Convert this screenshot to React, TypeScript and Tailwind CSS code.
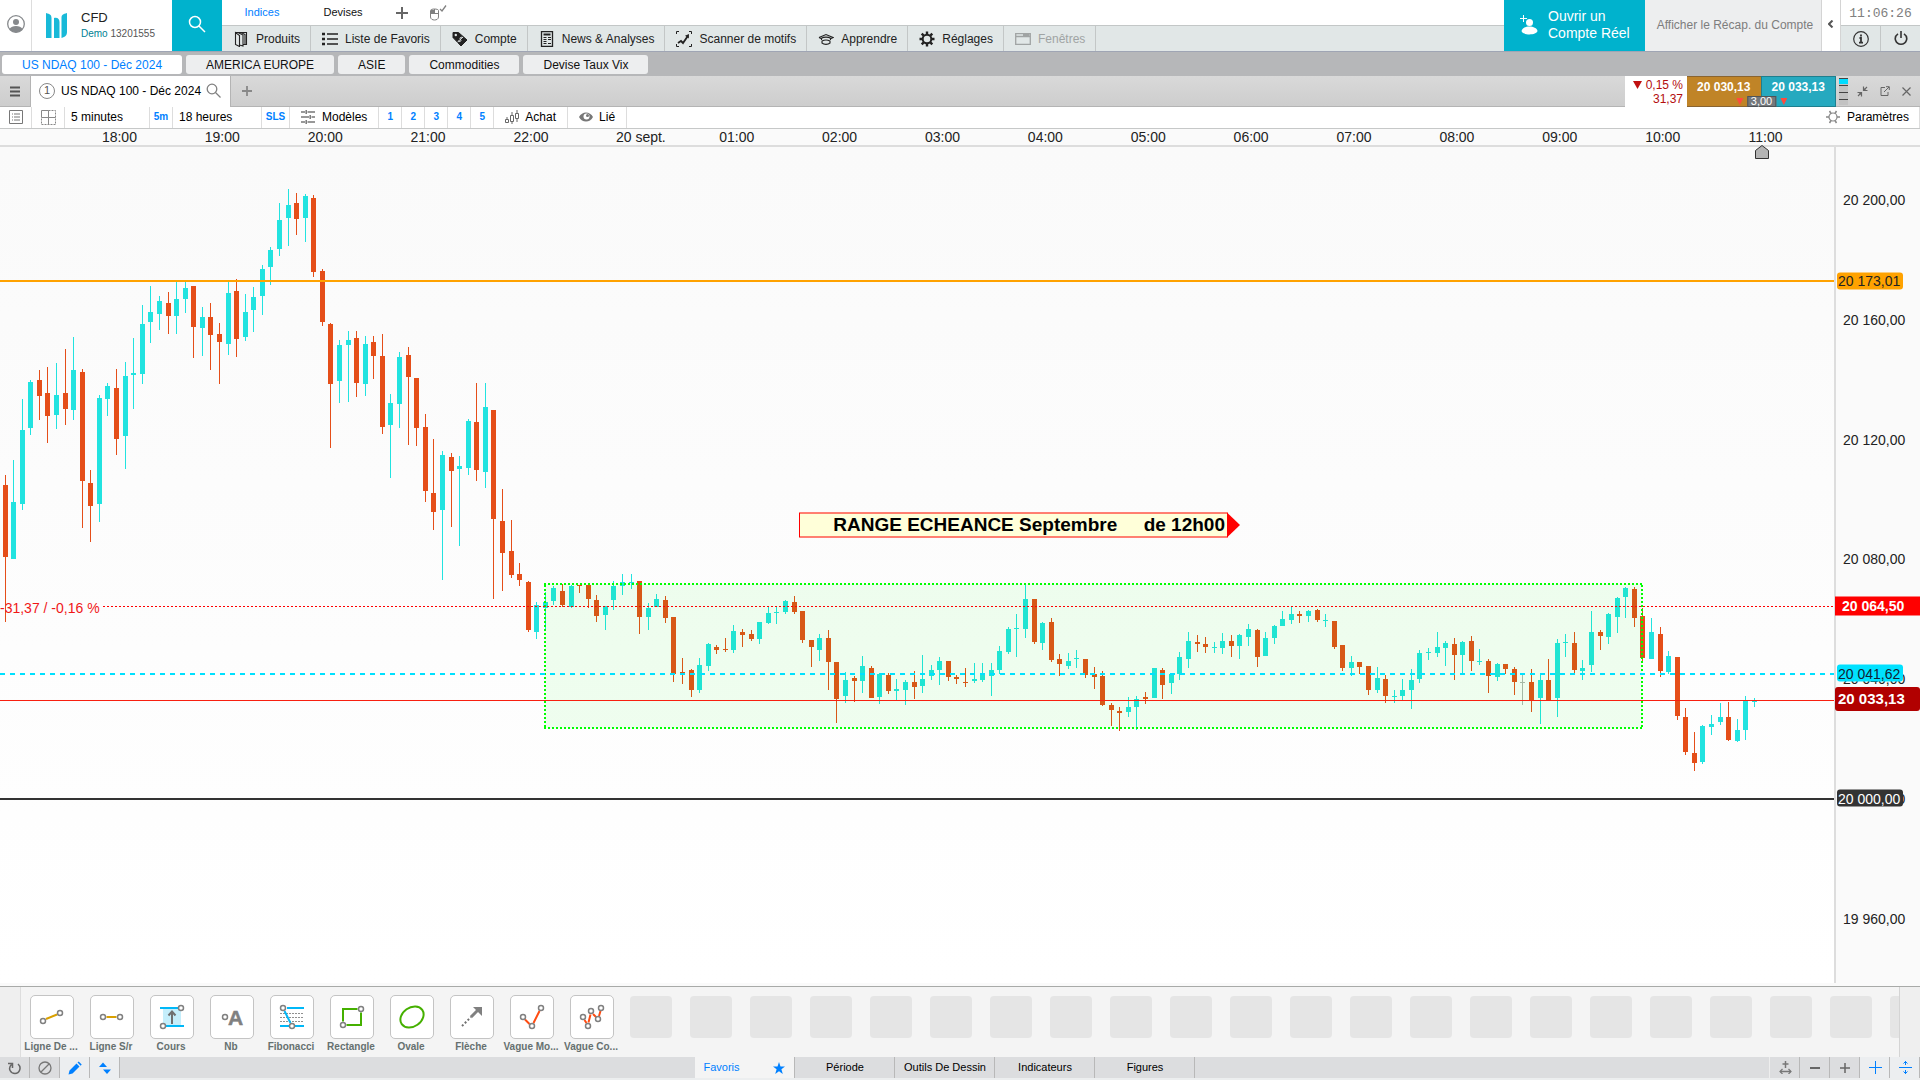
import { useState } from "react";
import type { ReactNode } from "react";

type Candle = ["u" | "d" | "n", number, number, number, number];

// [direction, high, body top, body bottom, low] in plot units
const CANDLES: Candle[] = [
  ["d", 328, 338, 410, 475], ["u", 313, 355, 412, 412], ["u", 252, 283, 357, 363], ["u", 233, 235, 281, 288],
  ["d", 223, 233, 249, 273], ["d", 220, 246, 269, 296], ["u", 216, 248, 268, 282], ["d", 202, 246, 262, 278],
  ["u", 190, 223, 263, 273], ["d", 222, 225, 334, 381], ["d", 323, 336, 359, 395], ["u", 248, 251, 357, 375],
  ["u", 236, 239, 252, 269], ["d", 222, 241, 292, 308], ["u", 215, 229, 289, 322], ["u", 191, 226, 228, 262],
  ["u", 158, 177, 227, 237], ["u", 139, 165, 175, 196], ["u", 149, 154, 167, 183], ["d", 145, 156, 169, 187],
  ["u", 135, 152, 169, 187], ["u", 134, 141, 152, 166], ["d", 139, 139, 180, 211], ["u", 160, 170, 181, 209],
  ["d", 156, 170, 188, 223], ["d", 176, 187, 195, 237], ["u", 134, 146, 197, 208], ["d", 132, 144, 192, 210],
  ["u", 147, 165, 190, 194], ["u", 140, 150, 163, 185], ["u", 118, 122, 149, 168], ["u", 100, 103, 120, 138],
  ["u", 56, 73, 102, 109], ["u", 42, 58, 71, 99], ["d", 46, 56, 72, 88], ["u", 47, 49, 71, 95],
  ["d", 48, 51, 125, 130], ["d", 122, 124, 175, 179], ["d", 176, 177, 237, 301], ["u", 193, 198, 234, 256],
  ["u", 184, 193, 198, 255], ["d", 184, 191, 236, 250], ["u", 189, 197, 237, 249], ["d", 189, 195, 209, 232],
  ["d", 187, 209, 280, 287], ["u", 247, 256, 278, 331], ["u", 205, 210, 257, 281], ["d", 200, 208, 230, 298],
  ["d", 231, 231, 281, 299], ["d", 267, 280, 344, 355], ["d", 292, 346, 365, 383], ["u", 304, 308, 363, 433],
  ["d", 306, 310, 324, 380], ["u", 309, 319, 322, 399], ["u", 272, 274, 321, 328], ["d", 236, 275, 323, 334],
  ["u", 236, 260, 325, 341], ["d", 263, 263, 372, 452], ["d", 342, 374, 406, 444], ["d", 373, 404, 428, 431],
  ["d", 416, 427, 433, 439], ["d", 434, 435, 483, 485], ["u", 455, 458, 485, 492], ["u", 445, 455, 461, 483],
  ["u", 439, 441, 454, 458], ["d", 437, 444, 458, 460], ["u", 438, 439, 460, 461], ["d", 438, 438, 439, 446],
  ["d", 438, 438, 452, 461], ["d", 448, 453, 469, 475], ["u", 459, 459, 468, 483], ["u", 434, 439, 453, 463],
  ["u", 427, 435, 439, 448], ["u", 427, 435, 436, 442], ["d", 434, 434, 470, 487], ["u", 456, 461, 470, 483],
  ["u", 447, 452, 460, 460], ["d", 449, 453, 471, 476], ["d", 470, 470, 527, 535], ["d", 511, 525, 526, 537],
  ["d", 522, 523, 543, 550], ["u", 511, 518, 543, 546], ["u", 496, 497, 519, 524], ["d", 498, 500, 503, 507],
  ["d", 491, 502, 503, 505], ["u", 478, 484, 503, 506], ["d", 482, 485, 488, 500], ["d", 483, 487, 492, 494],
  ["u", 475, 475, 492, 497], ["u", 459, 466, 476, 477], ["u", 459, 465, 466, 477], ["u", 453, 454, 465, 467],
  ["d", 449, 455, 465, 467], ["d", 464, 464, 493, 496], ["d", 493, 493, 500, 520], ["u", 487, 491, 503, 514],
  ["d", 483, 491, 515, 543], ["d", 515, 515, 552, 576], ["u", 525, 533, 549, 556], ["d", 529, 531, 534, 555],
  ["u", 509, 519, 534, 546], ["d", 519, 521, 551, 551], ["u", 526, 527, 550, 557], ["d", 526, 528, 544, 547],
  ["u", 532, 542, 544, 553], ["u", 533, 535, 543, 558], ["d", 524, 535, 540, 552], ["u", 508, 532, 539, 546],
  ["u", 518, 523, 529, 533], ["u", 510, 514, 523, 538], ["d", 514, 514, 530, 534], ["d", 528, 530, 532, 537],
  ["d", 521, 535, 536, 540], ["u", 516, 532, 534, 536], ["u", 516, 527, 533, 535], ["u", 516, 523, 529, 549],
  ["u", 499, 504, 523, 527], ["u", 480, 482, 505, 507], ["u", 467, 481, 482, 510], ["u", 438, 452, 482, 491],
  ["d", 452, 452, 495, 497], ["u", 475, 476, 496, 503], ["d", 471, 475, 513, 515], ["d", 507, 512, 517, 529],
  ["u", 506, 514, 519, 522], ["u", 503, 511, 512, 521], ["d", 512, 512, 528, 531], ["d", 520, 527, 530, 542],
  ["d", 524, 529, 558, 559], ["d", 556, 558, 563, 579], ["d", 560, 564, 566, 584], ["u", 550, 560, 565, 570],
  ["u", 549, 552, 560, 583], ["d", 545, 550, 552, 557], ["u", 521, 521, 551, 551], ["d", 521, 523, 538, 552],
  ["u", 526, 527, 536, 547], ["u", 505, 510, 527, 533], ["u", 485, 494, 512, 521], ["d", 488, 495, 497, 505],
  ["d", 490, 497, 500, 506], ["u", 495, 500, 501, 506], ["u", 486, 494, 501, 507], ["d", 488, 494, 499, 510],
  ["u", 487, 488, 499, 512], ["u", 477, 482, 490, 499], ["d", 482, 483, 510, 520], ["u", 485, 491, 509, 509],
  ["u", 478, 479, 491, 497], ["u", 464, 472, 479, 479], ["u", 460, 467, 473, 477], ["d", 464, 467, 469, 476],
  ["u", 463, 464, 469, 475], ["d", 462, 463, 473, 475], ["u", 467, 473, 474, 480], ["d", 474, 474, 500, 502],
  ["d", 498, 498, 521, 524], ["u", 509, 515, 521, 529], ["d", 515, 515, 520, 527], ["d", 519, 519, 543, 548],
  ["u", 520, 531, 543, 546], ["d", 528, 532, 549, 556], ["u", 543, 549, 550, 556], ["u", 532, 543, 549, 553],
  ["u", 522, 533, 543, 562], ["u", 503, 506, 532, 536], ["u", 501, 505, 506, 513], ["u", 485, 500, 506, 510],
  ["u", 494, 496, 501, 519], ["d", 491, 497, 508, 533], ["u", 494, 495, 508, 527], ["d", 489, 494, 514, 524],
  ["u", 502, 514, 515, 518], ["d", 512, 514, 529, 546], ["u", 516, 517, 530, 534], ["d", 517, 517, 522, 527],
  ["d", 520, 522, 535, 548], ["n", 527, 535, 536, 558], ["d", 522, 535, 553, 565], ["u", 527, 533, 551, 577],
  ["d", 512, 533, 553, 553], ["u", 492, 496, 551, 570], ["u", 487, 495, 496, 510], ["d", 485, 496, 523, 527],
  ["u", 513, 521, 524, 533], ["u", 464, 485, 518, 525], ["d", 483, 485, 489, 503], ["u", 466, 467, 490, 497],
  ["u", 450, 451, 470, 486], ["u", 440, 441, 450, 471], ["d", 440, 442, 471, 480], ["d", 461, 469, 511, 516],
  ["u", 471, 485, 512, 512], ["d", 480, 487, 524, 530], ["u", 504, 509, 525, 527], ["d", 510, 510, 569, 573],
  ["d", 561, 570, 605, 608], ["d", 585, 606, 616, 624], ["u", 578, 579, 615, 617], ["u", 568, 577, 580, 588],
  ["u", 556, 570, 575, 578], ["d", 555, 570, 593, 594], ["u", 572, 583, 594, 595], ["u", 549, 554, 583, 593],
  ["u", 551, 554, 555, 560],
];

const PLOT_W = 1834;
const PLOT_H = 836;
const COLORS = { u: "#22e3e0", d: "#e54e19", n: "#b0b4b0" };

const HOURS = [
  "18:00", "19:00", "20:00", "21:00", "22:00", "20 sept.", "01:00", "02:00", "03:00",
  "04:00", "05:00", "06:00", "07:00", "08:00", "09:00", "10:00", "11:00",
];

const PRICES = [
  { label: "20 200,00", y: 53 },
  { label: "20 160,00", y: 173 },
  { label: "20 120,00", y: 293 },
  { label: "20 080,00", y: 412 },
  { label: "20 040,00", y: 532 },
  { label: "20 000,00", y: 652 },
  { label: "19 960,00", y: 772 },
];

const TAGS = [
  { label: "20 173,01", y: 134, cls: "left-px w-[66px] h-[17px] rounded-[3px] bg-[#ffa200] pl-px text-sm text-[#222]" },
  { label: "20 041,62", y: 526, cls: "left-px w-[66px] h-[17px] rounded-[3px] bg-[#00e1ff] pl-px text-sm text-[#123]" },
  { label: "20 000,00", y: 651, cls: "left-px w-[66px] h-[17px] rounded-[3px] bg-[#333] pl-px text-sm text-white" },
  { label: "20 064,50", y: 459, cls: "-left-px right-0 h-[19px] bg-[#ff0000] pb-px pl-[7px] text-sm font-bold text-white" },
  { label: "20 033,13", y: 552, cls: "-left-px right-0 h-6 rounded-[3px] bg-[#b10000] pl-[3px] text-[15px] font-bold text-white" },
];

const pct = (y: number) => `${(y / PLOT_H) * 100}%`;

function Svg({ w = 16, h = 16, children, className = "" }: { w?: number; h?: number; children: ReactNode; className?: string }) {
  return (
    <svg width={w} height={h} viewBox={`0 0 ${w} ${h}`} fill="none" stroke="currentColor" className={`shrink-0 ${className}`} aria-hidden="true">
      {children}
    </svg>
  );
}

const menus = [
  {
    label: "Produits",
    icon: (
      <Svg>
        <path d="M2.500 1.500h11v12h-3M2.500 1.500v12l4 2v-11zM5 1.500l5 2.500v11l-3.500-1M8 1.500l4 2v9.500" strokeWidth="1.100" />
      </Svg>
    ),
  },
  {
    label: "Liste de Favoris",
    icon: (
      <Svg>
        <path d="M5 3h11M5 8h11M5 13h11" strokeWidth="1.300" />
        <path d="M0 3h3M0 8h3M0 13h3" strokeWidth="2.500" />
      </Svg>
    ),
  },
  {
    label: "Compte",
    icon: (
      <Svg>
        <path d="M1 1.500h5.500l8.500 7.500-6 6-8-8.500z" fill="currentColor" />
        <circle cx="3.800" cy="4" r="1.200" fill="#e1e7e7" stroke="none" />
        <path d="M10.500 6.500c-2-1-3.200.8-2 2s-.4 3-2.300 1.500M11 6l-5.500 5" stroke="#e1e7e7" />
      </Svg>
    ),
  },
  {
    label: "News & Analyses",
    icon: (
      <Svg>
        <path d="M2.500 .7h11v14.600h-11z" strokeWidth="1.300" />
        <path d="M4.500 3.500h7" strokeWidth="2" />
        <path d="M4.500 6.500h3M4.500 8.500h3M4.500 10.500h3M4.500 12.500h3M9 6.500h3M9 8.500h3M9 12.500h3" />
      </Svg>
    ),
  },
  {
    label: "Scanner de motifs",
    icon: (
      <Svg>
        <path d="M.5 3V.5H3M13 .5h2.500V3M.5 13v2.500H3M15.500 13v2.500H13" />
        <path d="M2 12l3-2 2 2 4.500-6.500" strokeWidth="1.800" />
        <path d="M13 3l-.2 4.500-3.800-2.700z" fill="currentColor" stroke="none" />
      </Svg>
    ),
  },
  {
    label: "Apprendre",
    icon: (
      <Svg>
        <path d="M1 6.500l7-3 7 3-2.500 1.200M1 6.500l2.500 1.200M3.500 9V7.200c2-1.500 7-1.500 9 0V9M4 10v2c2 1.800 6 1.800 8 0v-2c-2.500-1.300-5.500-1.300-8 0z" strokeWidth="1.100" />
      </Svg>
    ),
  },
  {
    label: "Réglages",
    icon: (
      <Svg>
        <circle cx="8" cy="8" r="4.300" strokeWidth="2" />
        <path d="M8 .5v3M8 12.500v3M.5 8h3M12.500 8h3M2.700 2.700l2 2M11.300 11.300l2 2M2.700 13.300l2-2M11.300 4.700l2-2" strokeWidth="2.400" />
      </Svg>
    ),
  },
  {
    label: "Fenêtres",
    off: true,
    icon: (
      <Svg>
        <path d="M.7 2.700h14.600v10.600H.7zM1 5.500h14" strokeWidth="1.300" />
        <path d="M8 4h6.500" strokeWidth="2" />
      </Svg>
    ),
  },
];

const workspaces = ["US NDAQ 100 - Déc 2024", "AMERICA EUROPE", "ASIE", "Commodities", "Devise Taux Vix"];

const dot = (x: number, y: number) => <circle key={`${x}-${y}`} cx={x} cy={y} r="2.500" fill="#fff" stroke="#808080" strokeWidth="1.500" />;

const tools = [
  { label: "Ligne De ...", art: <><path d="M16 24L27 19.500" stroke="#d9a000" strokeWidth="2" />{dot(13, 26)}{dot(30, 18)}</> },
  { label: "Ligne S/r", art: <><path d="M16.500 22h10" stroke="#d9a000" strokeWidth="2" />{dot(13, 22)}{dot(30, 22)}</> },
  {
    label: "Cours",
    art: (
      <>
        <path d="M13 13h18v17H13z" fill="#c5eefb" stroke="none" />
        <path d="M10 13h19M15 31h19" stroke="#00b8f8" strokeWidth="2" />
        <path d="M22 29V17M18.500 20.500l3.500-4 3.500 4" stroke="#707070" strokeWidth="2" />
        {dot(31, 13)}{dot(13, 31)}
      </>
    ),
  },
  {
    label: "Nb",
    art: (
      <>
        {dot(15, 22)}
        <text x="18" y="30" fill="#808080" stroke="#808080" strokeWidth=".5" fontSize="21" fontFamily="Liberation Sans, sans-serif">A</text>
      </>
    ),
  },
  {
    label: "Fibonacci",
    art: (
      <>
        <path d="M17 13h17M10 31h9M25 31h9" stroke="#00b8f8" strokeWidth="2" />
        <path d="M10 18.500h24M10 22.500h24M10 26.500h24" stroke="#909090" strokeDasharray="2 1" />
        <path d="M14.500 16l6 12" stroke="#00b8f8" strokeWidth="2" />
        {dot(13, 13)}{dot(22, 31)}
      </>
    ),
  },
  { label: "Rectangle", art: <><path d="M13 26.500V14h14.500M31 17.500V30H16.500" stroke="#45b000" strokeWidth="2" />{dot(31, 14)}{dot(13, 30)}</> },
  { label: "Ovale", art: <ellipse cx="22" cy="22" rx="12.500" ry="9.500" transform="rotate(-35 22 22)" stroke="#45b000" strokeWidth="2" /> },
  {
    label: "Flèche",
    art: (
      <>
        <path d="M12 31L21 22" stroke="#707070" strokeWidth="2" strokeDasharray="2 2" />
        <path d="M21 22l8-8" stroke="#808080" strokeWidth="3" />
        <path d="M23 12h9v9z" fill="#808080" stroke="none" />
      </>
    ),
  },
  { label: "Vague Mo...", art: <><path d="M15 24.500l4.500 4.500M23.500 28L29.500 16" stroke="#ff4b10" strokeWidth="2" />{dot(13, 22)}{dot(22, 31)}{dot(31, 13)}</> },
  {
    label: "Vague Co...",
    art: (
      <>
        <path d="M14.500 25l2 3M18.500 27.500l2-8M23 19l3.500 3.500M29 21l1.500-5" stroke="#ff4b10" strokeWidth="2" />
        {dot(13, 22)}{dot(18, 31)}{dot(21, 16)}{dot(28, 24)}{dot(31, 13)}
      </>
    ),
  },
];

function Header() {
  return (
    <header className="flex h-[51px] bg-white">
      <button aria-label="Profil" className="flex w-8 items-center justify-center border-r border-[#ddd] pb-1 text-[#86898c]">
        <Svg w={18} h={18}>
          <circle cx="9" cy="9" r="8.300" strokeWidth="1.300" />
          <circle cx="9" cy="7" r="3" fill="currentColor" stroke="none" />
          <path d="M2.500 14c2-4 11-4 13 0-2 4.300-11 4.300-13 0z" fill="currentColor" stroke="none" />
        </Svg>
      </button>
      <div className="flex w-[140px] items-center gap-[14px] pl-[14px]">
        <Svg w={21} h={25}>
          <path d="M0 0c4 1 5.500 2 5.500 5v20H0zM8 5c3.500-1 5.500 1 5.500 4v16H8zM21 0c-4 1-5.500 2-5.500 5v20c4-1 5.500-3 5.500-6z" fill="#18b9d8" stroke="none" />
        </Svg>
        <div>
          <div className="text-[13px] leading-4 text-[#222]">CFD</div>
          <div className="text-[10px] leading-[15px] text-[#555]"><span className="text-[#007f94]">Demo</span> 13201555</div>
        </div>
      </div>
      <button aria-label="Rechercher" className="flex w-[50px] items-center justify-center bg-[#00b2cd] pb-1 text-white">
        <Svg w={18} h={18}>
          <circle cx="7" cy="7" r="5.500" strokeWidth="1.500" />
          <path d="M11 11l6 6" strokeWidth="1.500" />
        </Svg>
      </button>
      <div className="flex min-w-0 flex-1 flex-col">
        <nav className="flex h-[25px] items-center text-[11px]">
          <a href="#indices" className="w-20 text-center text-[#0080ff]">Indices</a>
          <a href="#devises" className="w-[82px] text-center text-[#111]">Devises</a>
          <button aria-label="Ajouter" className="flex w-9 justify-center text-[#666]">
            <Svg w={12} h={12}><path d="M6 0v12M0 6h12" strokeWidth="2" /></Svg>
          </button>
          <button aria-label="Souris" className="flex w-9 justify-center text-[#808080]">
            <Svg w={18} h={18}>
              <path d="M1.500 9v4c0 4 8 4 8 0V6.500c0-2-8-2-8 0zM1.500 9.500h8M5.500 5v4" />
              <path d="M2 6h3v3H2z" fill="currentColor" stroke="none" />
              <path d="M11 5l2 2 4-5.500" strokeWidth="1.300" />
            </Svg>
          </button>
        </nav>
        <nav className="flex h-[26px] border-t border-[#c3c7c7] bg-[#e1e7e7] text-xs text-[#222]">
          {menus.map((m) => (
            <button key={m.label} disabled={m.off} className="flex items-center gap-[7px] border-r border-[#c3c7c7] pr-[10px] pl-[11px] whitespace-nowrap disabled:text-[#a0a4a4]">
              {m.icon}
              {m.label}
            </button>
          ))}
        </nav>
      </div>
      <button className="flex w-[141px] items-center gap-[10px] bg-[#00b2cd] pb-0.5 pl-4 text-left text-sm leading-[17px] text-white">
        <Svg w={18} h={20}>
          <path d="M3.500 0v7M0 3.500h7" />
          <circle cx="9.500" cy="7.500" r="3.500" fill="currentColor" stroke="none" />
          <path d="M1.500 16c1-6 15-6 16 0-1 4.500-15 4.500-16 0z" fill="currentColor" stroke="none" />
        </Svg>
        <span>Ouvrir un<br />Compte Réel</span>
      </button>
      <button className="w-[177px] border-r border-[#d4d4d4] bg-[#edeeef] pb-0.5 pl-1 text-xs text-[#7d7d7d]">Afficher le Récap. du Compte</button>
      <button aria-label="Replier" className="flex w-[19px] items-center justify-center border-r border-[#d4d4d4] pb-1 text-[#555]">
        <Svg w={6} h={8}><path d="M4.500 .5L1 4l3.500 3.500" strokeWidth="2" /></Svg>
      </button>
      <div className="flex w-[79px] flex-col">
        <div className="flex h-[25px] items-center justify-center pt-0.5 font-['Liberation_Mono',monospace] text-[13px] text-[#808080]">11:06:26</div>
        <div className="flex h-[26px] border-t border-[#c3c7c7] bg-[#e1e7e7] text-[#333]">
          <button aria-label="Informations" className="flex flex-1 items-center justify-center border-r border-[#c3c7c7]">
            <Svg>
              <circle cx="8" cy="8" r="7.300" strokeWidth="1.200" />
              <path d="M8 3.500v2M6.500 7H8v4.500M6 11.700h4" strokeWidth="1.800" />
            </Svg>
          </button>
          <button aria-label="Quitter" className="flex flex-1 items-center justify-center">
            <Svg w={14} h={15}>
              <path d="M7 0v7M4 2.800c-5 3.500-2.500 10.500 3 10.500s8-7 3-10.500" strokeWidth="1.600" />
            </Svg>
          </button>
        </div>
      </div>
    </header>
  );
}

function ChartTitleBar() {
  return (
    <div className="flex h-[31px] bg-linear-to-b from-[#d9d9d9] to-[#cdcdcd]">
      <button aria-label="Menu" className="flex w-[31px] items-center justify-center border-r border-b border-[#b4b4b4] text-[#555]">
        <Svg w={10} h={11}><path d="M0 1.500h10M0 5.500h10M0 9.500h10" strokeWidth="1.800" /></Svg>
      </button>
      <div className="flex w-[199px] items-center bg-white pb-0.5 pl-2 text-xs text-black">
        <span className="mr-1.5 flex size-4 items-center justify-center rounded-full border border-[#888] text-[11px] text-[#555]">1</span>
        <span className="whitespace-nowrap">US NDAQ 100 - Déc 2024</span>
        <button aria-label="Rechercher un marché" className="ml-[5px] text-[#808080]">
          <Svg w={15} h={15}>
            <circle cx="6" cy="6" r="4.800" strokeWidth="1.300" />
            <path d="M9.500 9.500l5 5" strokeWidth="1.300" />
          </Svg>
        </button>
      </div>
      <button aria-label="Nouvel onglet" className="flex w-8 items-center justify-center border-b border-l border-[#b4b4b4] text-[#888]">
        <Svg w={10} h={10}><path d="M5 0v10M0 5h10" strokeWidth="1.800" /></Svg>
      </button>
      <div className="flex-1 border-b border-[#b4b4b4]" />
      <div className="w-[62px] bg-white pt-0.5 pr-1 text-right text-xs leading-[14px] whitespace-nowrap text-[#b30e0e]">
        <div className="flex items-center justify-end gap-1">
          <Svg w={9} h={8}><path d="M0 0h9L4.500 8z" fill="#c01010" stroke="none" /></Svg>0,15 %
        </div>
        <div>31,37</div>
      </div>
      <div className="relative flex w-[149px] text-xs font-bold text-white">
        <button className="flex-1 border-t border-b border-t-[#8a6430] border-b-[#8a6430] bg-[#c08427] pb-2.5">20 030,13</button>
        <button className="flex-1 border-t border-r border-b border-l border-[#1e7f8e] bg-[#26a9bf] pb-2.5">20 033,13</button>
        <div className="absolute bottom-0 left-1/2 flex -translate-x-1/2 items-center gap-1 text-[11px] font-normal">
          <Svg w={7} h={7}><path d="M0 0h7L3.500 7z" fill="#ff4a3d" stroke="none" /></Svg>
          <span className="flex h-[11px] items-center border border-[#505458] bg-[#74787c] px-[3px] leading-none">3,00</span>
          <Svg w={7} h={7}><path d="M0 0h7L3.500 7z" fill="#ff4a3d" stroke="none" /></Svg>
        </div>
      </div>
      <div className="flex w-[84px] items-center border-b border-[#b4b4b4] pl-[3px] text-[#666]">
        <Svg w={9} h={27}>
          <path d="M0 0h9v27H0z" fill="#c2c2c2" stroke="none" />
          <path d="M0 0h9v6H0z" fill="#00dcff" stroke="none" />
          <path d="M0 .5h9M0 7.500h9M0 14.500h9M0 21.500h9" stroke="#444" />
        </Svg>
        <button aria-label="Réduire" className="ml-[9px]">
          <Svg w={11} h={11}>
            <path d="M6.500 .5v4h4M.5 6.500h4v4" strokeWidth="1.200" />
            <path d="M6.500 1.500v3h3zM4.500 9.500v-3h-3z" fill="currentColor" stroke="none" />
            <path d="M7 4L10 1M4 7L1 10" strokeWidth="1.100" />
          </Svg>
        </button>
        <button aria-label="Détacher" className="ml-3">
          <Svg w={10} h={10}><path d="M5 1.500H1v8h7V6M4 6l5-5M6 .7h3.300V4" /></Svg>
        </button>
        <button aria-label="Fermer" className="ml-3">
          <Svg w={9} h={9}><path d="M.5 .5l8 8M8.500 .5l-8 8" strokeWidth="1.200" /></Svg>
        </button>
      </div>
    </div>
  );
}

function ChartToolbar() {
  const cell = "flex items-center border-r border-[#ddd] pb-px";
  return (
    <div className="flex h-[22px] border-b border-[#c6c8c8] bg-white text-xs text-black">
      <button aria-label="Liste" className={`${cell} w-8 justify-center text-[#777]`}>
        <Svg w={14} h={14}>
          <path d="M.5 .5h13v13H.5zM5 4h6M5 7h6M5 10h6M3 4h1M3 7h1M3 10h1" />
        </Svg>
      </button>
      <button aria-label="Disposition" className={`${cell} w-[33px] justify-center text-[#888]`}>
        <Svg w={15} h={15}>
          <path d="M.5 .5h7v7h-7zM7.500 7.500v7M7.500 7.500h7" />
          <path d="M7.500 .5h7v14H.5v-7" strokeDasharray="2 1" />
        </Svg>
      </button>
      <select aria-label="Unité de temps" className="w-[85px] appearance-none border-r border-[#ddd] pb-0.5 pl-[6px]">
        <option>5 minutes</option>
      </select>
      <button className={`${cell} w-[23px] justify-center text-[10px] font-bold text-[#0080ff]`}>5m</button>
      <select aria-label="Période" className="w-[89px] appearance-none border-r border-[#ddd] pb-0.5 pl-[6px]">
        <option>18 heures</option>
      </select>
      <button className={`${cell} w-[28px] justify-center text-[10px] font-bold text-[#0080ff]`}>SLS</button>
      <button className={`${cell} gap-[7px] px-[11px]`}>
        <Svg w={14} h={14} className="text-[#777]">
          <path d="M0 2h4M6.500 2H14M0 7h8M10.500 7H14M0 12h4M6.500 12H14" strokeWidth="1.300" />
          <path d="M5.200 0v4M9.200 5v4M5.200 10v4" strokeWidth="1.500" />
        </Svg>
        Modèles
      </button>
      {[1, 2, 3, 4, 5].map((n) => (
        <button key={n} className={`${cell} w-[23px] justify-center text-[10px] font-bold text-[#0080ff]`}>{n}</button>
      ))}
      <button className={`${cell} gap-[5px] px-[11px]`}>
        <Svg w={15} h={14} className="text-[#666]">
          <path d="M.5 9.500h3v3h-3zM5.500 5.500h3v6h-3zM10.500 3.500h3v5h-3zM2 7v2M7 2v3M7 12v2M12 0v3M12 9v3" />
        </Svg>
        Achat
      </button>
      <button className={`${cell} gap-[6px] px-[11px]`}>
        <Svg w={14} h={12} className="text-[#777]">
          <path d="M0 6c3-6 11-6 14 0-3 6-11 6-14 0z" fill="currentColor" stroke="none" />
          <circle cx="7.500" cy="5.500" r="3" fill="#fff" stroke="none" />
          <circle cx="8.500" cy="4.500" r="1.500" fill="currentColor" stroke="none" />
        </Svg>
        Lié
      </button>
      <div className="flex-1" />
      <button className={`${cell} gap-[7px] pr-[10px]`}>
        <Svg w={14} h={14} className="text-[#888]">
          <circle cx="7" cy="7" r="4" strokeWidth="1.200" />
          <path d="M0 7h3M11 7h3M3.500 1l1.500 2.500M10.500 1L9 3.500M3.500 13L5 10.500M10.500 13L9 10.500" strokeWidth="1.500" />
        </Svg>
        Paramètres
      </button>
    </div>
  );
}

function Chart() {
  return (
    <main className="flex min-h-0 flex-1 flex-col bg-[#fafafa]">
      <div className="relative h-[18px] border-b-2 border-[#ddd]">
        <div className="mr-[103px] ml-[68px] grid grid-cols-17 text-center text-sm leading-4 text-[#222]">
          {HOURS.map((h) => <span key={h} className={h.includes("sept") ? "pl-3.5" : ""}>{h}</span>)}
        </div>
        <Svg w={14} h={14} className="absolute top-4 right-[151px] z-10">
          <path d="M.5 13.500v-8L7 .5l6.500 5v8z" fill="#b4b4b4" stroke="#333" />
        </Svg>
      </div>
      <div className="flex min-h-0 flex-1">
        <div className="relative min-w-0 flex-1 overflow-hidden bg-linear-to-b from-[#fafafa] to-white">
          <svg viewBox={`0 0 ${PLOT_W} ${PLOT_H}`} preserveAspectRatio="none" shapeRendering="crispEdges" className="absolute inset-0 size-full" role="img" aria-label="US NDAQ 100">
            {CANDLES.map(([dir, high, top, bottom, low], i) => {
              const x = Math.floor(5.1 + i * 8.575);
              return (
                <g key={i} fill={COLORS[dir]}>
                  <rect x={x} y={high} width="1" height={low - high} />
                  <rect x={x - 2} y={top} width="5" height={bottom - top} />
                </g>
              );
            })}
            <rect x="545" y="437" width="1097" height="144" fill="#00ff00" fillOpacity="0.060" />
            <path d="M544 437H1643M544 581H1643M545 438V581M1642 438V581" stroke="#00ff00" strokeWidth="2" strokeDasharray="2 2" />
            <path d="M0 134H1834" stroke="#ffa200" strokeWidth="2" />
            <path d="M103 459.500H1834" stroke="#ff0000" strokeDasharray="2 2" />
            <path d="M0 527H1834" stroke="#00e1ff" strokeWidth="2" strokeDasharray="5 5" />
            <path d="M0 553.500H1834" stroke="#f82010" />
            <path d="M0 652H1834" stroke="#333" strokeWidth="2" />
          </svg>
          <div className="absolute left-0 -translate-y-1/2 text-sm leading-4 whitespace-nowrap text-[#f01818]" style={{ top: pct(461) }}>-31,37 / -0,16 %</div>
          <div className="absolute left-[799px] flex -translate-y-1/2 items-center" style={{ top: pct(378) }}>
            <div className="flex h-[25px] w-[429px] items-center justify-end border border-[#ff0000] bg-[#ffffd9] pr-0.5 text-[19px] font-bold whitespace-pre text-black">
              RANGE ECHEANCE Septembre{"     "}de 12h00
            </div>
            <Svg w={12} h={25}><path d="M0 1l12 11.500L0 24z" fill="#ff0000" stroke="none" /></Svg>
          </div>
        </div>
        <div className="relative w-[86px] border-l-2 border-[#ddd] text-[#222]">
          {PRICES.map((p) => (
            <div key={p.label} className="absolute left-[7px] -translate-y-1/2 text-sm leading-4 whitespace-nowrap" style={{ top: pct(p.y) }}>{p.label}</div>
          ))}
          {TAGS.map((t) => (
            <div key={t.label} className={`absolute flex -translate-y-1/2 items-center whitespace-nowrap ${t.cls}`} style={{ top: pct(t.y) }}>{t.label}</div>
          ))}
        </div>
      </div>
      <div className="h-[3px]" />
    </main>
  );
}

function ToolPanel() {
  return (
    <section className="flex h-[71px] border-t border-[#a8aaa8] bg-[#f4f4f4]">
      <div className="w-[21px] shrink-0 border-r border-[#ddd] bg-[#efefef]" />
      <div className="flex min-w-0 flex-1 overflow-hidden pt-2">
        {tools.map((t) => (
          <button key={t.label} className="flex w-[60px] shrink-0 flex-col items-center gap-0.5 text-[10px] leading-3 font-bold whitespace-nowrap text-[#66706f]">
            <span className="ml-0.5 rounded-[5px] border border-[#c4c4c4] bg-white">
              <Svg w={42} h={42}><g transform="translate(-1 -1)">{t.art}</g></Svg>
            </span>
            {t.label}
          </button>
        ))}
        {Array.from({ length: 22 }, (_, i) => (
          <div key={i} className="flex w-[60px] shrink-0 justify-center">
            <div className="mt-px size-[42px] rounded bg-[#e5e5e5]" />
          </div>
        ))}
      </div>
      <div className="w-[21px] shrink-0 border-l border-[#d4d4d4] bg-[#efefef]" />
    </section>
  );
}

function BottomBar() {
  const [tab, setTab] = useState("Favoris");
  const btn = "flex w-[30px] items-center justify-center border-r border-[#b8b8b8] pl-px";
  return (
    <footer className="flex h-[21px] bg-[#dcdddf] text-[11px] text-black">
      <button aria-label="Actualiser" className={`${btn} text-[#666]`}>
        <Svg w={14} h={14}><path d="M3.500 3.500c-4 4-1 9 3.500 9s7-6 3-9.500M0 2.500h4.500V7" strokeWidth="1.500" /></Svg>
      </button>
      <button aria-label="Effacer" className={`${btn} text-[#777]`}>
        <Svg w={14} h={14}><circle cx="7" cy="7" r="6" strokeWidth="1.300" /><path d="M3 11l8-8" strokeWidth="1.300" /></Svg>
      </button>
      <button aria-label="Dessiner" className={`${btn} bg-[#eceef0] text-[#0080ff]`}>
        <Svg w={14} h={14}><path d="M.5 13.500l1-4 7-7 3 3-7 7zM9.500 1.500l1.200-1 3 3-1 1.200z" fill="currentColor" stroke="none" /></Svg>
      </button>
      <button aria-label="Aimanter" className={`${btn} bg-[#eceef0] text-[#0080ff]`}>
        <Svg w={12} h={12}><path d="M0 5h8L4 .5zM4 7.500h8L8 12z" fill="currentColor" stroke="none" /></Svg>
      </button>
      <div className="flex-1" />
      {["Favoris", "Période", "Outils De Dessin", "Indicateurs", "Figures"].map((t) => (
        <button
          key={t}
          onClick={() => setTab(t)}
          className={`flex w-[100px] items-center border-r border-[#b8b8b8] whitespace-nowrap ${t === "Favoris" ? "justify-between px-[9px]" : "justify-center pl-0.5"} ${t === tab ? "bg-[#f4f4f4] text-[#0080ff]" : ""}`}
        >
          {t}
          {t === "Favoris" && (
            <Svg w={12} h={12}><path d="M6 0l1.500 4.500H12L8.400 7.200 9.800 12 6 9.200 2.200 12l1.400-4.800L0 4.500h4.500z" fill="#0080ff" stroke="none" /></Svg>
          )}
        </button>
      ))}
      <div className="flex-1 border-r border-[#eee]" />
      <button aria-label="Ajuster" className={`${btn} text-[#777]`}>
        <Svg w={13} h={13}><path d="M6.500 0v7M3.500 3h6M1 10.500h11" strokeWidth="1.500" /><path d="M3.500 8L1 10.500 3.500 13M9.500 8l2.500 2.500L9.500 13" strokeWidth="1.200" /></Svg>
      </button>
      <button aria-label="Dézoomer" className={`${btn} text-[#666]`}>
        <Svg w={10} h={10}><path d="M0 5h10" strokeWidth="2" /></Svg>
      </button>
      <button aria-label="Zoomer" className={`${btn} text-[#666]`}>
        <Svg w={10} h={10}><path d="M0 5h10M5 0v10" strokeWidth="1.500" /></Svg>
      </button>
      <button aria-label="Réticule" className={`${btn} bg-[#eceef0] text-[#0080ff]`}>
        <Svg w={13} h={13}><path d="M0 6.500h13M6.500 0v13" /></Svg>
      </button>
      <button aria-label="Ligne horizontale" className={`${btn} bg-[#eceef0] text-[#0080ff]`}>
        <Svg w={13} h={13}><path d="M0 6.500h13M6.500 0v4M6.500 9v4M4.500 2.500l2-2 2 2M4.500 10.500l2 2 2-2" /></Svg>
      </button>
    </footer>
  );
}

export default function App() {
  return (
    <div className="flex h-screen flex-col overflow-hidden bg-white font-['Liberation_Sans',Arial,sans-serif]">
      <Header />
      <div className="flex h-[25px] gap-1 border-t border-[#9fa5b4] bg-[#b6b7b9] px-0.5 pb-0.5 text-xs">
        {workspaces.map((w, i) => (
          <button key={w} className={`mt-[3px] rounded-[3px] px-5 whitespace-nowrap ${i === 0 ? "bg-white text-[#0080ff]" : "bg-[#edeeef] text-[#111]"}`}>
            {w}
          </button>
        ))}
      </div>
      <ChartTitleBar />
      <ChartToolbar />
      <Chart />
      <ToolPanel />
      <BottomBar />
      <div className="h-0.5 bg-[#eceeef]" />
    </div>
  );
}
